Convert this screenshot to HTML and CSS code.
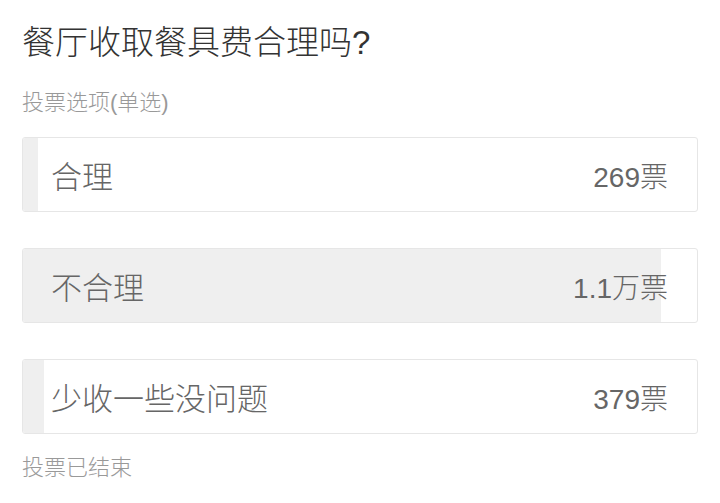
FILE: index.html
```html
<!DOCTYPE html>
<html lang="zh-CN">
<head>
  <meta charset="UTF-8">
  <meta name="viewport" content="width=device-width, initial-scale=1.0">
  <title>投票</title>
  <link rel="stylesheet" href="styles.css">
</head>
<body>
  <div class="poll">
    <h1 class="poll-title">餐厅收取餐具费合理吗?</h1>
    <div class="poll-hint">投票选项(单选)</div>

    <div class="option">
      <div class="fill" style="width: 2.2%"></div>
      <span class="label">合理</span>
      <span class="count">269票</span>
    </div>
    <div class="option">
      <div class="fill" style="width: 94.6%"></div>
      <span class="label">不合理</span>
      <span class="count">1.1万票</span>
    </div>
    <div class="option">
      <div class="fill" style="width: 3.1%"></div>
      <span class="label">少收一些没问题</span>
      <span class="count">379票</span>
    </div>

    <div class="poll-hint poll-end">投票已结束</div>
  </div>
</body>
</html>
```

FILE: styles.css
```css
body {
  margin: 0;
  background: #fff;
  font-family: "Liberation Sans", "Noto Sans CJK SC", sans-serif;
}
.poll {
  padding: 23px 22px 0 22px;
}
.poll-title {
  margin: 0;
  font-size: 33px;
  line-height: 40px;
  font-weight: 300;
  color: #333;
}
.poll-hint {
  margin-top: 25px;
  font-size: 22px;
  line-height: 30px;
  font-weight: 300;
  color: #999;
}
.option {
  position: relative;
  display: flex;
  justify-content: space-between;
  align-items: center;
  height: 73px;
  margin-top: 19px;
  padding: 0 29px 0 28px;
  border: 1px solid #e6e6e6;
  border-radius: 3px;
  overflow: hidden;
}
.option + .option {
  margin-top: 36px;
}
.fill {
  position: absolute;
  left: 0;
  top: 0;
  bottom: 0;
  background: #efefef;
}
.label {
  position: relative;
  font-size: 31px;
  font-weight: 300;
  color: #666;
}
.count {
  position: relative;
  font-size: 28px;
  font-weight: 300;
  color: #666;
}
.poll-end {
  margin-top: 19px;
}
```
